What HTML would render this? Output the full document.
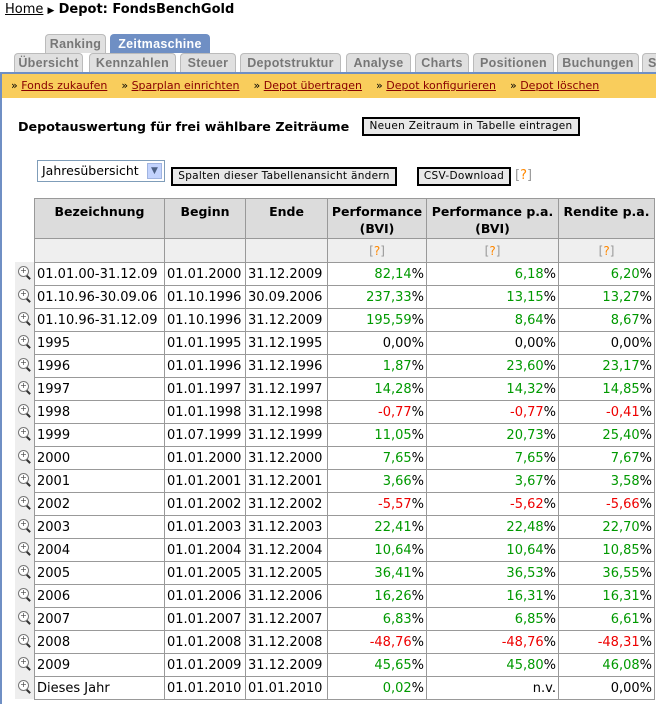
<!DOCTYPE html>
<html><head><meta charset="utf-8"><style>
*{margin:0;padding:0;box-sizing:border-box}
body{width:656px;height:704px;overflow:hidden;background:#fff;font-family:"DejaVu Sans","Liberation Sans",sans-serif;font-size:13px;color:#000;position:relative}
.a{position:absolute;white-space:nowrap}
.tab{position:absolute;height:19px;background:#e0e0e0;border:1px solid #bbb;border-bottom:none;border-radius:4px 4px 0 0;color:#777;font-family:"Liberation Sans",sans-serif;font-weight:bold;font-size:12.5px;text-align:center;line-height:18px;overflow:hidden;letter-spacing:.3px}
.btn{position:absolute;border:2px solid #000;background:#e8e8e8;font-size:10.5px;text-align:center;line-height:14px;letter-spacing:.3px}
.q{color:#999}.q b{color:#f80;font-weight:normal}
table{position:absolute;left:34px;top:198px;border-collapse:collapse;table-layout:fixed;width:620px}
td,th{border:1px solid #999;height:23px;padding:0 2px;white-space:nowrap;overflow:hidden}
th{background:#dcdcdc;font-size:12.5px;vertical-align:top;padding-top:4px;height:40px;line-height:17px}
tr.s td{background:#efefef;text-align:center;height:24px;font-size:12px}
td.r{text-align:right}
.g{color:#090}.rd{color:#e00}
.ic{position:absolute;left:15px;width:19px;height:23px;background:#eee}
.ic:after{content:"+";position:absolute;left:3px;top:4px;width:9px;height:9px;border:1px solid #777;border-radius:50%;background:#fff;font-size:8px;line-height:7px;text-align:center;color:#444}
.ic:before{content:"";position:absolute;left:10px;top:14px;width:6px;height:2px;background:#333;transform:rotate(45deg)}
</style></head><body>
<div class="a" style="left:5px;top:2px;font-size:13px;"><span style="text-decoration:underline">Home</span> <span style="font-size:9px">&#9654;</span> <b>Depot: FondsBenchGold</b></div>
<div class="tab" style="left:45px;top:34px;width:61px;">Ranking</div>
<div class="tab" style="left:110px;top:34px;width:100px;background:#6f8fc4;border-color:#6f8fc4;color:#fff">Zeitmaschine</div>
<div class="tab" style="left:14px;top:53px;width:69px">Übersicht</div>
<div class="tab" style="left:89px;top:53px;width:87px">Kennzahlen</div>
<div class="tab" style="left:180px;top:53px;width:56px">Steuer</div>
<div class="tab" style="left:240px;top:53px;width:101px">Depotstruktur</div>
<div class="tab" style="left:346px;top:53px;width:65px">Analyse</div>
<div class="tab" style="left:415px;top:53px;width:54px">Charts</div>
<div class="tab" style="left:473px;top:53px;width:81px">Positionen</div>
<div class="tab" style="left:557px;top:53px;width:82px">Buchungen</div>
<div class="tab" style="left:642px;top:53px;width:30px;text-align:left;padding-left:5px">S</div>
<div class="a" style="left:0;top:72px;width:656px;height:2px;background:#6f8fc4"></div>
<div class="a" style="left:0;top:72px;width:2px;height:632px;background:#6f8fc4"></div>
<div class="a" style="left:2px;top:74px;width:654px;height:24px;background:#f9cd5c;font-size:11px;line-height:24px;color:#800;padding-left:9px">
<span style="color:#000">»</span> <u>Fonds zukaufen</u>&nbsp;&nbsp;&nbsp; <span style="color:#000">»</span> <u>Sparplan einrichten</u>&nbsp;&nbsp;&nbsp; <span style="color:#000">»</span> <u>Depot übertragen</u>&nbsp;&nbsp;&nbsp; <span style="color:#000">»</span> <u>Depot konfigurieren</u>&nbsp;&nbsp;&nbsp; <span style="color:#000">»</span> <u>Depot löschen</u></div>
<div class="a" style="left:18px;top:119px;font-size:12.7px;font-weight:bold">Depotauswertung für frei wählbare Zeiträume</div>
<div class="btn" style="left:362px;top:117px;width:218px;height:19px">Neuen Zeitraum in Tabelle eintragen</div>
<div class="a" style="left:37px;top:160px;width:128px;height:22px;border:1px solid #7f9db9;font-size:12.5px;line-height:20px;padding-left:4px">Jahresübersicht<span style="position:absolute;right:2px;top:2px;width:15px;height:16px;background:#c3d3fd;border:1px solid #a0b4e0;font-size:9px;line-height:15px;text-align:center;color:#4d6185">&#9660;</span></div>
<div class="btn" style="left:171px;top:167px;width:226px;height:19px">Spalten dieser Tabellenansicht ändern</div>
<div class="btn" style="left:417px;top:167px;width:94px;height:19px">CSV-Download</div>
<div class="a q" style="left:515px;top:168px;font-size:13px">[<b>?</b>]</div>
<table>
<colgroup><col style="width:130px"><col style="width:81px"><col style="width:82px"><col style="width:99px"><col style="width:132px"><col style="width:96px"></colgroup>
<tr><th>Bezeichnung</th><th>Beginn</th><th>Ende</th><th>Performance<br>(BVI)</th><th>Performance p.a.<br>(BVI)</th><th>Rendite p.a.</th></tr>
<tr class="s"><td></td><td></td><td></td><td class="q">[<b>?</b>]</td><td class="q">[<b>?</b>]</td><td class="q">[<b>?</b>]</td></tr>
<tr><td>01.01.00-31.12.09</td><td>01.01.2000</td><td>31.12.2009</td><td class="r"><span class="g">82,14</span>%</td><td class="r"><span class="g">6,18</span>%</td><td class="r"><span class="g">6,20</span>%</td></tr>
<tr><td>01.10.96-30.09.06</td><td>01.10.1996</td><td>30.09.2006</td><td class="r"><span class="g">237,33</span>%</td><td class="r"><span class="g">13,15</span>%</td><td class="r"><span class="g">13,27</span>%</td></tr>
<tr><td>01.10.96-31.12.09</td><td>01.10.1996</td><td>31.12.2009</td><td class="r"><span class="g">195,59</span>%</td><td class="r"><span class="g">8,64</span>%</td><td class="r"><span class="g">8,67</span>%</td></tr>
<tr><td>1995</td><td>01.01.1995</td><td>31.12.1995</td><td class="r">0,00%</td><td class="r">0,00%</td><td class="r">0,00%</td></tr>
<tr><td>1996</td><td>01.01.1996</td><td>31.12.1996</td><td class="r"><span class="g">1,87</span>%</td><td class="r"><span class="g">23,60</span>%</td><td class="r"><span class="g">23,17</span>%</td></tr>
<tr><td>1997</td><td>01.01.1997</td><td>31.12.1997</td><td class="r"><span class="g">14,28</span>%</td><td class="r"><span class="g">14,32</span>%</td><td class="r"><span class="g">14,85</span>%</td></tr>
<tr><td>1998</td><td>01.01.1998</td><td>31.12.1998</td><td class="r"><span class="rd">-0,77</span>%</td><td class="r"><span class="rd">-0,77</span>%</td><td class="r"><span class="rd">-0,41</span>%</td></tr>
<tr><td>1999</td><td>01.07.1999</td><td>31.12.1999</td><td class="r"><span class="g">11,05</span>%</td><td class="r"><span class="g">20,73</span>%</td><td class="r"><span class="g">25,40</span>%</td></tr>
<tr><td>2000</td><td>01.01.2000</td><td>31.12.2000</td><td class="r"><span class="g">7,65</span>%</td><td class="r"><span class="g">7,65</span>%</td><td class="r"><span class="g">7,67</span>%</td></tr>
<tr><td>2001</td><td>01.01.2001</td><td>31.12.2001</td><td class="r"><span class="g">3,66</span>%</td><td class="r"><span class="g">3,67</span>%</td><td class="r"><span class="g">3,58</span>%</td></tr>
<tr><td>2002</td><td>01.01.2002</td><td>31.12.2002</td><td class="r"><span class="rd">-5,57</span>%</td><td class="r"><span class="rd">-5,62</span>%</td><td class="r"><span class="rd">-5,66</span>%</td></tr>
<tr><td>2003</td><td>01.01.2003</td><td>31.12.2003</td><td class="r"><span class="g">22,41</span>%</td><td class="r"><span class="g">22,48</span>%</td><td class="r"><span class="g">22,70</span>%</td></tr>
<tr><td>2004</td><td>01.01.2004</td><td>31.12.2004</td><td class="r"><span class="g">10,64</span>%</td><td class="r"><span class="g">10,64</span>%</td><td class="r"><span class="g">10,85</span>%</td></tr>
<tr><td>2005</td><td>01.01.2005</td><td>31.12.2005</td><td class="r"><span class="g">36,41</span>%</td><td class="r"><span class="g">36,53</span>%</td><td class="r"><span class="g">36,55</span>%</td></tr>
<tr><td>2006</td><td>01.01.2006</td><td>31.12.2006</td><td class="r"><span class="g">16,26</span>%</td><td class="r"><span class="g">16,31</span>%</td><td class="r"><span class="g">16,31</span>%</td></tr>
<tr><td>2007</td><td>01.01.2007</td><td>31.12.2007</td><td class="r"><span class="g">6,83</span>%</td><td class="r"><span class="g">6,85</span>%</td><td class="r"><span class="g">6,61</span>%</td></tr>
<tr><td>2008</td><td>01.01.2008</td><td>31.12.2008</td><td class="r"><span class="rd">-48,76</span>%</td><td class="r"><span class="rd">-48,76</span>%</td><td class="r"><span class="rd">-48,31</span>%</td></tr>
<tr><td>2009</td><td>01.01.2009</td><td>31.12.2009</td><td class="r"><span class="g">45,65</span>%</td><td class="r"><span class="g">45,80</span>%</td><td class="r"><span class="g">46,08</span>%</td></tr>
<tr><td>Dieses Jahr</td><td>01.01.2010</td><td>01.01.2010</td><td class="r"><span class="g">0,02</span>%</td><td class="r">n.v.</td><td class="r">0,00%</td></tr>
</table>
<div class="ic" style="top:262px"></div><div class="ic" style="top:285px"></div><div class="ic" style="top:308px"></div><div class="ic" style="top:331px"></div><div class="ic" style="top:354px"></div><div class="ic" style="top:377px"></div><div class="ic" style="top:400px"></div><div class="ic" style="top:423px"></div><div class="ic" style="top:446px"></div><div class="ic" style="top:469px"></div><div class="ic" style="top:492px"></div><div class="ic" style="top:515px"></div><div class="ic" style="top:538px"></div><div class="ic" style="top:561px"></div><div class="ic" style="top:584px"></div><div class="ic" style="top:607px"></div><div class="ic" style="top:630px"></div><div class="ic" style="top:653px"></div><div class="ic" style="top:676px"></div>
</body></html>
